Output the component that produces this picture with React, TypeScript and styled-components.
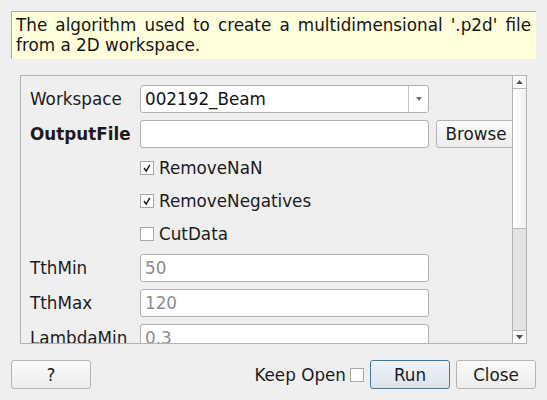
import React from "react";
import styled, { createGlobalStyle } from "styled-components";

const GlobalStyle = createGlobalStyle`
    html, body {
        margin: 0;
        padding: 0;
        background: #efefef;
    }
    body {
        font-family: "DejaVu Sans", "Liberation Sans", sans-serif;
        font-size: 16.8px;
        color: #1b1b1b;
    }
`;

const Dialog = styled.div`
    width: 547px;
    height: 400px;
    box-sizing: border-box;
    padding: 11px;
    display: flex;
    flex-direction: column;
    background: #efefef;
`;

const Description = styled.div`
    background: #ffffdc;
    border-top: 1px solid #a9a9a9;
    border-left: 1px solid #a9a9a9;
    padding: 3px 5px 4px 4px;
    line-height: 20px;
    text-align: justify;
    color: #141414;
`;

const Panel = styled.div`
    margin: 16px 9px 0 9px;
    height: 269px;
    box-sizing: border-box;
    border: 1px solid #b4b4b4;
    display: flex;
`;

const Viewport = styled.div`
    flex: 1;
    overflow: hidden;
    padding: 9px 0 0 9px;
`;

const Form = styled.div`
    display: grid;
    grid-template-columns: 103px 289px 80px;
    column-gap: 7px;
    row-gap: 7px;
    align-items: center;
`;

const Label = styled.div<{ $bold?: boolean }>`
    font-weight: ${(p) => (p.$bold ? "bold" : "normal")};
    white-space: nowrap;
`;

const TextInput = styled.div<{ $muted?: boolean }>`
    grid-column: 2;
    height: 28px;
    box-sizing: border-box;
    border: 1px solid #b2b2b2;
    border-radius: 3px;
    background: #ffffff;
    padding-left: 4px;
    display: flex;
    align-items: center;
    color: ${(p) => (p.$muted ? "#8c8c8c" : "#141414")};
`;

const Combo = styled(TextInput)`
    padding-left: 0;
`;

const ComboText = styled.div`
    flex: 1;
    padding-left: 4px;
`;

const ComboButton = styled.div`
    width: 19px;
    align-self: stretch;
    border-left: 1px solid #c4c4c4;
    display: flex;
    align-items: center;
    justify-content: center;
`;

const CheckRow = styled.div`
    grid-column: 2 / span 2;
    height: 26px;
    display: flex;
    align-items: center;
    gap: 5px;
`;

const Box = styled.div`
    width: 14px;
    height: 14px;
    box-sizing: border-box;
    border: 1px solid #a8a8a8;
    background: #ffffff;
    display: flex;
    align-items: center;
    justify-content: center;
    flex-shrink: 0;
`;

const Button = styled.div<{ $default?: boolean }>`
    width: 80px;
    height: 29px;
    box-sizing: border-box;
    border: 1px solid ${(p) => (p.$default ? "#3f78a8" : "#b4b4b4")};
    border-radius: 3px;
    background: ${(p) =>
        p.$default
            ? "linear-gradient(#f1f4f7, #dbe2e9)"
            : "linear-gradient(#fbfbfb, #ececec)"};
    display: flex;
    align-items: center;
    justify-content: center;
    flex-shrink: 0;
`;

const BrowseButton = styled(Button)`
    height: 28px;
`;

const ScrollBar = styled.div`
    width: 14px;
    box-sizing: border-box;
    border-left: 1px solid #b4b4b4;
    display: flex;
    flex-direction: column;
    background: #e3e3e3;
`;

const ScrollArrow = styled.div<{ $down?: boolean }>`
    height: 13px;
    box-sizing: border-box;
    background: #fafafa;
    ${(p) => (p.$down ? "border-top: 1px solid #b8b8b8;" : "border-bottom: 1px solid #b8b8b8;")}
    display: flex;
    align-items: center;
    justify-content: center;
`;

const ScrollHandle = styled.div`
    height: 140px;
    box-sizing: border-box;
    border-bottom: 1px solid #b8b8b8;
    background: linear-gradient(to right, #ffffff, #f1f1f1);
`;

const Footer = styled.div`
    margin-top: 16px;
    display: flex;
    align-items: center;
`;

const Spacer = styled.div`
    flex: 1;
`;

const KeepOpen = styled.div`
    display: flex;
    align-items: center;
    gap: 4px;
    margin-right: 6px;
`;

const RightButtons = styled.div`
    display: flex;
    gap: 6px;
`;

const Tick = () => (
    <svg width="12" height="12" viewBox="0 0 12 12">
        <polyline points="3,6 5.2,9.2 8.8,2.8" fill="none" stroke="#1e1e1e" strokeWidth="1.5" />
    </svg>
);

const Check = ({ checked }: { checked?: boolean }) => <Box>{checked && <Tick />}</Box>;

const Triangle = ({ up, color, w }: { up?: boolean; color: string; w: number }) => (
    <svg width={w} height={w / 2 + 1} viewBox={`0 0 ${w} ${w / 2 + 1}`}>
        <polygon
            points={up ? `0,${w / 2 + 1} ${w},${w / 2 + 1} ${w / 2},0` : `0,0 ${w},0 ${w / 2},${w / 2 + 1}`}
            fill={color}
        />
    </svg>
);

export default function App() {
    return (
        <Dialog>
            <GlobalStyle />
            <Description>
                The algorithm used to create a multidimensional '.p2d' file from a 2D workspace.
            </Description>
            <Panel>
                <Viewport>
                    <Form>
                        <Label>Workspace</Label>
                        <Combo>
                            <ComboText>002192_Beam</ComboText>
                            <ComboButton>
                                <Triangle color="#6e6e6e" w={6} />
                            </ComboButton>
                        </Combo>
                        <div />
                        <Label $bold>OutputFile</Label>
                        <TextInput />
                        <BrowseButton>Browse</BrowseButton>
                        <div />
                        <CheckRow>
                            <Check checked />
                            RemoveNaN
                        </CheckRow>
                        <div />
                        <CheckRow>
                            <Check checked />
                            RemoveNegatives
                        </CheckRow>
                        <div />
                        <CheckRow>
                            <Check />
                            CutData
                        </CheckRow>
                        <Label>TthMin</Label>
                        <TextInput $muted>50</TextInput>
                        <div />
                        <Label>TthMax</Label>
                        <TextInput $muted>120</TextInput>
                        <div />
                        <Label>LambdaMin</Label>
                        <TextInput $muted>0.3</TextInput>
                        <div />
                    </Form>
                </Viewport>
                <ScrollBar>
                    <ScrollArrow>
                        <Triangle up color="#505050" w={7} />
                    </ScrollArrow>
                    <ScrollHandle />
                    <Spacer />
                    <ScrollArrow $down>
                        <Triangle color="#505050" w={7} />
                    </ScrollArrow>
                </ScrollBar>
            </Panel>
            <Footer>
                <Button>?</Button>
                <Spacer />
                <KeepOpen>
                    Keep Open
                    <Check />
                </KeepOpen>
                <RightButtons>
                    <Button $default>Run</Button>
                    <Button>Close</Button>
                </RightButtons>
            </Footer>
        </Dialog>
    );
}
